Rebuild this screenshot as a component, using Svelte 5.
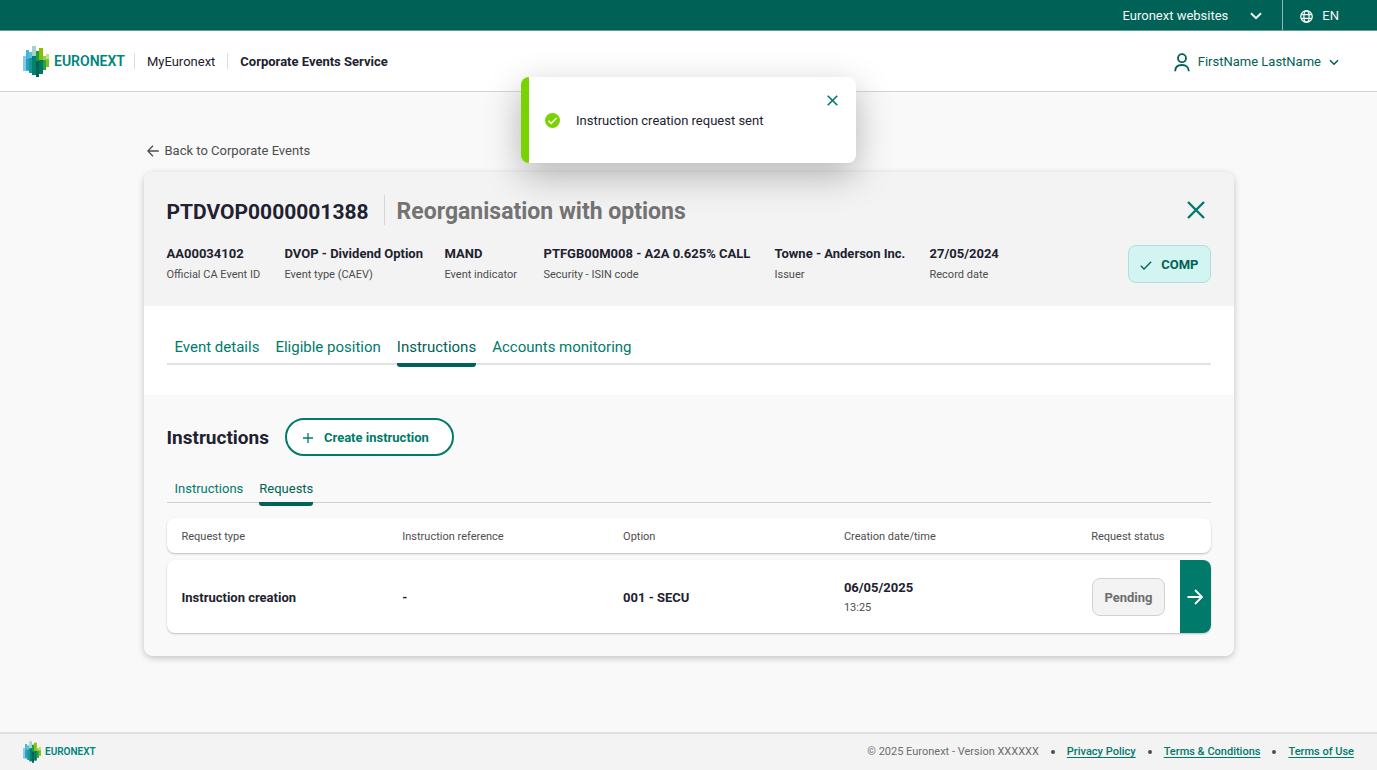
<script lang="ts">
	interface Fact {
		value: string;
		label: string;
	}

	interface Request {
		type: string;
		reference: string;
		option: string;
		date: string;
		time: string;
		status: string;
	}

	const facts: Fact[] = [
		{ value: 'AA00034102', label: 'Official CA Event ID' },
		{ value: 'DVOP - Dividend Option', label: 'Event type (CAEV)' },
		{ value: 'MAND', label: 'Event indicator' },
		{ value: 'PTFGB00M008 - A2A 0.625% CALL', label: 'Security - ISIN code' },
		{ value: 'Towne - Anderson Inc.', label: 'Issuer' },
		{ value: '27/05/2024', label: 'Record date' }
	];

	const tabs = ['Event details', 'Eligible position', 'Instructions', 'Accounts monitoring'];
	const subTabs = ['Instructions', 'Requests'];
	const columns = ['Request type', 'Instruction reference', 'Option', 'Creation date/time', 'Request status'];
	const legal = ['Privacy Policy', 'Terms & Conditions', 'Terms of Use'];

	const requests: Request[] = [
		{
			type: 'Instruction creation',
			reference: '-',
			option: '001 - SECU',
			date: '06/05/2025',
			time: '13:25',
			status: 'Pending'
		}
	];

	let activeTab = $state('Instructions');
	let activeSubTab = $state('Requests');
	let toastOpen = $state(true);
</script>

{#snippet logo(small: boolean)}
	<a class="logo" class:small href="#home">
		<svg viewBox="0 0 26 31" aria-hidden="true">
			<rect x="0" y="10" width="3" height="15" fill="#84cbe8" />
			<rect x="3" y="4" width="3" height="21" fill="#41b4e0" />
			<rect x="6" y="6" width="3" height="10" fill="#5dbfce" />
			<rect x="9" y="0" width="4" height="11" fill="#a3d3cc" />
			<rect x="13" y="5" width="3" height="12" fill="#1f9a45" />
			<rect x="16" y="2" width="4" height="13" fill="#8abf00" />
			<rect x="20" y="10" width="3" height="8" fill="#8fcf6a" />
			<rect x="23" y="8" width="3" height="6" fill="#bfe07c" />
			<rect x="23" y="13" width="3" height="8" fill="#86c10f" />
			<rect x="20" y="14" width="3" height="10" fill="#1fa83e" />
			<rect x="3" y="13" width="3" height="11" fill="#2a9fc4" />
			<rect x="6" y="12" width="3" height="15" fill="#1c9490" />
			<rect x="9" y="10" width="4" height="19" fill="#007f72" />
			<rect x="13" y="15" width="3" height="16" fill="#006455" />
			<rect x="16" y="14" width="4" height="14" fill="#007566" />
		</svg>
		<span>EURONEXT</span>
	</a>
{/snippet}

{#snippet tabBar(items: string[], active: string, select: (item: string) => void, small: boolean)}
	<div class="tabs" class:small role="tablist">
		{#each items as item}
			<button type="button" role="tab" aria-selected={item === active} class:active={item === active} onclick={() => select(item)}>
				{item}
			</button>
		{/each}
	</div>
{/snippet}

<div class="page">
	<div class="topbar">
		<button type="button" class="sites">
			Euronext websites
			<svg width="12" height="8" viewBox="0 0 12 8" aria-hidden="true"><path d="M1 1.2 6 6.2 11 1.2" stroke-width="2" /></svg>
		</button>
		<button type="button" class="lang">
			<svg width="13" height="13" viewBox="0 0 14 14" aria-hidden="true">
				<g stroke-width="1.4">
					<circle cx="7" cy="7" r="6.2" />
					<ellipse cx="7" cy="7" rx="2.8" ry="6.2" />
					<path d="M1.3 4.9h11.4M1.3 9.1h11.4" />
				</g>
			</svg>
			EN
		</button>
	</div>

	<header class="header">
		{@render logo(false)}
		<a class="crumb" href="#my">MyEuronext</a>
		<a class="crumb current" href="#ces">Corporate Events Service</a>
		<button type="button" class="user">
			<svg width="16" height="19" viewBox="0 0 16 19" aria-hidden="true">
				<g stroke-width="1.8"><circle cx="8" cy="5.2" r="4" /><path d="M1.2 18.2c0-4 2.7-6.2 6.8-6.2s6.8 2.2 6.8 6.2" /></g>
			</svg>
			FirstName LastName
			<svg width="10" height="7" viewBox="0 0 10 7" aria-hidden="true"><path d="M1 1.2 5 5.2 9 1.2" stroke-width="1.6" /></svg>
		</button>
	</header>

	<main>
		<a class="back" href="#events">
			<svg width="12" height="12" viewBox="0 0 12 12" aria-hidden="true"><path d="M11.8 6H1M6 .8.8 6 6 11.2" stroke-width="1.3" /></svg>
			Back to Corporate Events
		</a>

		<article class="card">
			<div class="summary">
				<div class="title">
					<h1>PTDVOP0000001388</h1>
					<p>Reorganisation with options</p>
					<button type="button" class="close" aria-label="Close event">
						<svg width="18" height="18" viewBox="0 0 18 18" aria-hidden="true"><path d="M1 1l16 16M17 1 1 17" stroke-width="2.4" /></svg>
					</button>
				</div>
				<div class="details">
					<dl>
						{#each facts as fact}
							<div>
								<dt>{fact.label}</dt>
								<dd>{fact.value}</dd>
							</div>
						{/each}
					</dl>
					<span class="badge comp">
						<svg width="12" height="9" viewBox="0 0 12 9" aria-hidden="true"><path d="M.8 4.8 4 8 11.2.8" stroke-width="1.3" /></svg>
						COMP
					</span>
				</div>
			</div>

			<div class="nav">
				{@render tabBar(tabs, activeTab, (t) => (activeTab = t), false)}
			</div>

			<section class="content">
				<div class="section-head">
					<h2>Instructions</h2>
					<button type="button" class="create">
						<svg width="10" height="10" viewBox="0 0 10 10" aria-hidden="true"><path d="M5 0v10M0 5h10" stroke-width="1.3" /></svg>
						Create instruction
					</button>
				</div>

				{@render tabBar(subTabs, activeSubTab, (t) => (activeSubTab = t), true)}

				<table>
					<thead>
						<tr>
							{#each columns as column}
								<th scope="col">{column}</th>
							{/each}
						</tr>
					</thead>
					<tbody>
						{#each requests as request}
							<tr>
								<td>{request.type}</td>
								<td>{request.reference}</td>
								<td>{request.option}</td>
								<td>{request.date}<small>{request.time}</small></td>
								<td><span class="badge">{request.status}</span></td>
								<td>
									<button type="button" class="open" aria-label="Open request">
										<svg width="16" height="16" viewBox="0 0 16 16" aria-hidden="true"><path d="M.5 8H14M8 1l7 7-7 7" stroke-width="1.9" /></svg>
									</button>
								</td>
							</tr>
						{/each}
					</tbody>
				</table>
			</section>
		</article>
	</main>

	<footer>
		{@render logo(true)}
		<span class="copyright">© 2025 Euronext - Version XXXXXX</span>
		{#each legal as item}
			<i class="dot"></i>
			<a href="#legal">{item}</a>
		{/each}
	</footer>

	{#if toastOpen}
		<div class="toast" role="status">
			<svg width="15" height="15" viewBox="0 0 15 15" aria-hidden="true">
				<circle cx="7.5" cy="7.5" r="7.5" fill="#78d300" stroke="none" />
				<path d="M3.5 7.7 6.2 10.4 11.6 5" stroke="#fff" stroke-width="1.5" />
			</svg>
			<span>Instruction creation request sent</span>
			<button type="button" aria-label="Dismiss" onclick={() => (toastOpen = false)}>
				<svg width="11" height="11" viewBox="0 0 11 11" aria-hidden="true"><path d="M.7.7l9.6 9.6M10.3.7.7 10.3" stroke-width="1.6" /></svg>
			</button>
		</div>
	{/if}
</div>

<style>
	:global(body) {
		background: #f9f9f9;
	}

	.page {
		--green: #007a6b;
		--green-dark: #006156;
		--ink: #22212f;
		--grey: #4d4d4d;
		position: relative;
		display: flex;
		flex-direction: column;
		min-height: 100vh;
		font-family: Roboto, sans-serif;
		font-size: 13px;
		line-height: 16px;
		color: var(--ink);
	}

	* {
		box-sizing: border-box;
	}

	svg {
		flex: none;
		display: block;
		fill: none;
		stroke: currentColor;
	}

	button {
		padding: 0;
		border: 0;
		background: none;
		color: inherit;
		font: inherit;
		cursor: pointer;
	}

	a {
		color: inherit;
		text-decoration: none;
	}

	h1,
	h2,
	p,
	dl,
	dd {
		margin: 0;
	}

	.topbar {
		display: flex;
		justify-content: flex-end;
		height: 31px;
		padding-right: 23px;
		background: var(--green-dark);
		border-bottom: 1px solid #5f9c95;
		color: #f3f8f7;
	}

	.sites,
	.lang {
		display: flex;
		align-items: center;
		padding-top: 2px;
	}

	.sites {
		gap: 22px;
		padding-right: 20px;
	}

	.lang {
		gap: 9px;
		padding-left: 17px;
		padding-right: 15px;
		border-left: 1px solid #8fbab5;
	}

	.header {
		display: flex;
		align-items: center;
		height: 61px;
		padding: 0 38px 0 23px;
		background: #fff;
		border-bottom: 1px solid #d6d6d6;
	}

	.logo {
		display: flex;
		align-items: center;
		gap: 5px;
		font-size: 14px;
		font-weight: 600;
		color: #00857a;
	}

	.logo svg {
		width: 26px;
		height: 31px;
		stroke: none;
	}

	.logo.small {
		gap: 4px;
		font-size: 10px;
	}

	.logo.small svg {
		width: 18px;
		height: 22px;
	}

	.crumb {
		margin-left: 9px;
		padding: 2px 0 0 12px;
		border-left: 1px solid #dcdcdc;
		line-height: 14px;
	}

	.crumb.current {
		margin-left: 12px;
		font-weight: 700;
	}

	.user {
		display: flex;
		align-items: center;
		gap: 8px;
		margin-left: auto;
		padding-top: 2px;
		color: var(--green-dark);
	}

	main {
		width: 100%;
		max-width: 1090px;
		margin: 0 auto;
		padding: 51px 0 76px;
		flex: 1;
	}

	.back {
		display: flex;
		align-items: center;
		gap: 6px;
		padding-left: 3px;
		color: var(--grey);
	}

	.card {
		margin-top: 13px;
		border-radius: 9px;
		overflow: hidden;
		box-shadow: 0 2px 7px rgba(0, 0, 0, 0.22);
	}

	.summary {
		padding: 23px;
		background: #f3f3f3;
	}

	.title {
		display: flex;
		align-items: center;
		line-height: 26px;
		font-weight: 700;
	}

	.title h1 {
		font-size: 21px;
		font-weight: inherit;
		padding: 4px 15px 0 0;
	}

	.title p {
		padding: 4px 0 0 12px;
		border-left: 1px solid #d6d6d6;
		font-size: 23px;
		color: #737373;
	}

	.close {
		margin: 0 6px 0 auto;
		color: var(--green);
	}

	.details {
		display: flex;
		justify-content: space-between;
		margin-top: 20px;
	}

	dl {
		display: grid;
		grid-template-columns: 118px 160px 99px 231px 155px auto;
		padding-top: 1px;
	}

	dl div {
		display: flex;
		flex-direction: column-reverse;
		justify-content: flex-end;
		gap: 6px;
	}

	dt {
		font-size: 11px;
		line-height: 14px;
		color: var(--grey);
	}

	dd {
		font-weight: 700;
	}

	.badge {
		display: inline-flex;
		align-items: center;
		gap: 9px;
		height: 38px;
		padding: 2px 11px 0;
		border: 1px solid #d2d2d2;
		border-radius: 8px;
		background: #f3f3f3;
		font-weight: 700;
		color: #6e6e6e;
	}

	.badge.comp {
		border-color: #a9e2da;
		background: #d3f5f1;
		color: var(--green-dark);
	}

	.nav {
		padding: 30px 23px;
		background: #fff;
	}

	.tabs {
		display: flex;
		gap: 16px;
		height: 29px;
		padding-left: 8px;
		border-bottom: 2px solid #e2e2e2;
		font-size: 15px;
		color: var(--green);
	}

	.tabs.small {
		height: 24px;
		margin-top: 23px;
		border-bottom: 1px solid #cfcfcf;
		font-size: 13px;
	}

	.tabs button {
		position: relative;
		height: 22px;
	}

	.tabs.small button {
		height: 20px;
	}

	.tabs button.active {
		color: var(--green-dark);
	}

	.tabs button.active::after {
		content: '';
		position: absolute;
		left: 0;
		right: 0;
		top: 27px;
		height: 4px;
		border-radius: 0 0 3px 3px;
		background: var(--green-dark);
	}

	.tabs.small button.active::after {
		top: 23px;
	}

	.content {
		padding: 23px;
		background: #f9f9f9;
	}

	.section-head {
		display: flex;
		align-items: center;
		gap: 16px;
	}

	h2 {
		padding-top: 2px;
		font-size: 19px;
		line-height: 24px;
		font-weight: 700;
	}

	.create {
		display: flex;
		align-items: center;
		gap: 11px;
		height: 38px;
		padding: 2px 23px 0 16px;
		border: 2px solid var(--green);
		border-radius: 19px;
		background: #fff;
		color: var(--green);
		font-weight: 700;
	}

	table,
	thead,
	tbody {
		display: block;
	}

	tr {
		display: grid;
		grid-template-columns: repeat(4, minmax(0, 25fr)) minmax(0, 13fr) 31px;
		align-items: center;
		padding-left: 15px;
		border-radius: 8px;
		background: #fff;
		box-shadow: 0 1px 2px rgba(0, 0, 0, 0.24);
		overflow: hidden;
	}

	thead tr {
		height: 35px;
		margin-top: 15px;
	}

	tbody tr {
		height: 73px;
		margin-top: 7px;
	}

	th,
	td {
		padding: 2px 0 0;
		text-align: left;
	}

	th {
		font-size: 11px;
		font-weight: 400;
		color: var(--grey);
	}

	td {
		font-weight: 700;
	}

	th:nth-child(5),
	td:nth-child(5) {
		padding-right: 15px;
		text-align: right;
		white-space: nowrap;
	}

	td:nth-child(n + 5) {
		padding-top: 0;
	}

	td small {
		display: block;
		margin-top: 5px;
		font-size: 11px;
		line-height: 14px;
		font-weight: 400;
		color: var(--grey);
	}

	td .badge {
		vertical-align: top;
	}

	.open {
		display: flex;
		align-items: center;
		justify-content: center;
		width: 31px;
		height: 73px;
		background: var(--green);
		color: #fff;
	}

	footer {
		display: flex;
		align-items: center;
		height: 38px;
		padding: 0 23px;
		border-top: 2px solid #dfdfdf;
		background: #f3f3f3;
		font-size: 11px;
	}

	.copyright {
		margin-left: auto;
		color: #6e6e6e;
	}

	footer > a:not(.logo) {
		color: var(--green);
		font-weight: 500;
		text-decoration: underline;
		text-underline-offset: 2px;
	}

	.dot {
		width: 4px;
		height: 4px;
		margin: 0 12px;
		border-radius: 50%;
		background: #4d4d4d;
	}

	.toast {
		position: absolute;
		top: 77px;
		left: 0;
		right: 0;
		display: flex;
		align-items: center;
		gap: 16px;
		width: 335px;
		height: 86px;
		margin: 0 auto;
		padding-left: 16px;
		border-left: 8px solid #78d300;
		border-radius: 8px;
		background: #fff;
		box-shadow: 0 12px 36px rgba(0, 0, 0, 0.28);
	}

	.toast span {
		padding-top: 2px;
	}

	.toast button {
		position: absolute;
		top: 18px;
		right: 18px;
		color: var(--green);
	}
</style>
